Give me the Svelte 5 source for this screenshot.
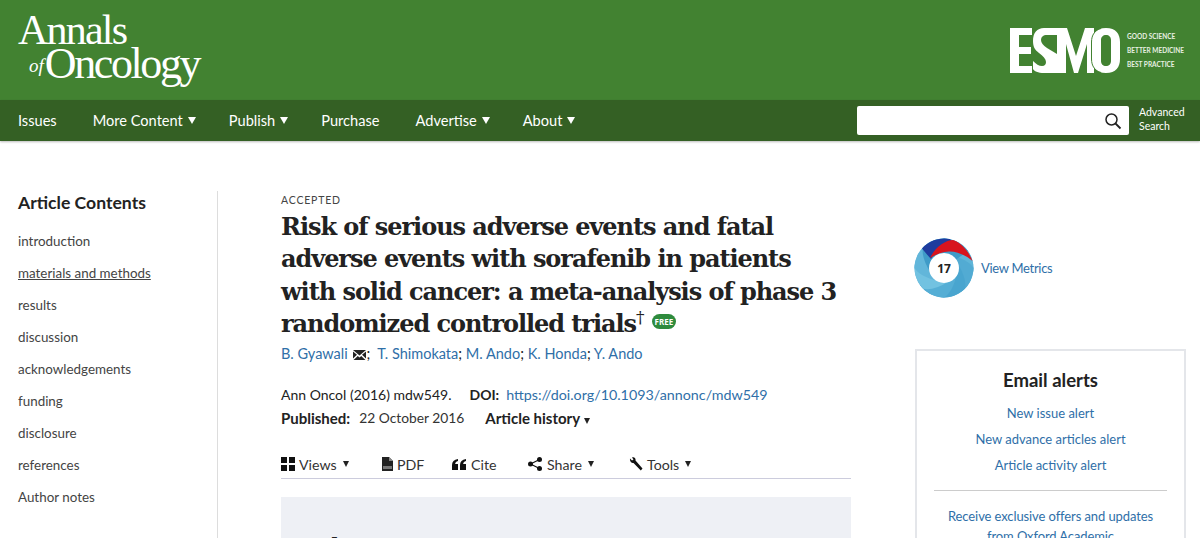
<script>
  const nav = [
    { label: 'Issues' },
    { label: 'More Content', caret: true },
    { label: 'Publish', caret: true },
    { label: 'Purchase' },
    { label: 'Advertise', caret: true },
    { label: 'About', caret: true }
  ];
  const toc = ['introduction', 'materials and methods', 'results', 'discussion', 'acknowledgements', 'funding', 'disclosure', 'references', 'Author notes'];
  const authors = ['T. Shimokata', 'M. Ando', 'K. Honda', 'Y. Ando'];
  const petals = [
    { r: 0, c: '#68bbdc' }, { r: 45, c: '#5fb5d8' }, { r: 90, c: '#52abd3' }, { r: 135, c: '#49a5cf' },
    { r: 180, c: '#55aed5' }, { r: 225, c: '#72c2e1' }, { r: 270, c: '#62b6da' }, { r: 315, c: '#3f9bc8' }
  ];
</script>

<div class="page">
  <header class="brand">
    <div class="logo">
      <span class="annals">Annals</span>
      <span class="oncology"><i>of</i>Oncology</span>
    </div>
    <div class="esmo">
      <svg class="esmo-mark" width="110" height="45" viewBox="0 0 110 45" aria-hidden="true">
        <path fill="#fff" d="M0 0H22V7H9V19H21V26H9V38H22V45H0Z"/>
        <path fill="#fff" d="M34 0H48V45H34C28 45 24 43 23 41V33C26 36 29 38 32 38C35 38 36 36 36 34C36 31 33 28 29 25C25 22 23 19 23 13C23 5 27 0 34 0Z"/>
        <path fill="#428231" d="M47 7H37C33 7 31 9 31 12C31 15 33 17 37 20L47 26Z"/>
        <path fill="#fff" d="M48 0H57L66 28L75 0H84V45H77V16L68 45H64L56 16V45H48Z"/>
        <path fill="#fff" fill-rule="evenodd" d="M96 0C106 0 110 6 110 14V31C110 39 106 45 96 45C86 45 82 39 82 31V14C82 6 86 0 96 0ZM96 7C93 7 91 9 91 12V33C91 36 93 38 96 38C99 38 101 36 101 33V12C101 9 99 7 96 7Z"/>
        <path fill="none" stroke="#428231" stroke-width="1" d="M91 .5C85 2 81.500 7 81.500 14V31C81.500 38 85 43 91 44.500"/>
      </svg>
      <div class="tag"><span>GOOD SCIENCE</span><span>BETTER MEDICINE</span><span>BEST PRACTICE</span></div>
    </div>
  </header>

  <nav class="nav">
    <ul>
      {#each nav as n}
        <li class:plain={!n.caret}>{n.label}{#if n.caret}<span class="caret"></span>{/if}</li>
      {/each}
    </ul>
    <div class="search">
      <div class="box">
        <svg width="18" height="18" viewBox="0 0 18 18" aria-hidden="true"><circle cx="7.500" cy="7.500" r="5.500" fill="none" stroke="#222" stroke-width="1.500"/><path d="M11.500 11.500l5 5" stroke="#222" stroke-width="1.800"/></svg>
      </div>
      <div class="adv">Advanced<br />Search</div>
    </div>
  </nav>

  <main class="body">
    <aside class="side">
      <h2>Article Contents</h2>
      <ul>
        {#each toc as t, i}
          <li class:ul={i === 1}>{t}</li>
        {/each}
      </ul>
    </aside>

    <article class="article">
      <div class="accepted">ACCEPTED</div>
      <h1>Risk of serious adverse events and fatal adverse events with sorafenib in patients with solid cancer: a meta-analysis of phase 3 randomized controlled trials<sup>†</sup><span class="free">FREE</span></h1>
      <div class="authors">
        <a href="#a">B. Gyawali</a>
        <svg class="mail" width="13" height="10" viewBox="0 0 13 10" aria-hidden="true"><path d="M0 0h13L6.500 5.500zM0 1.500v7l4-3.700zM13 1.500v7l-4-3.700zM.5 10l4.300-4 1.700 1.500L8.200 6l4.300 4z" fill="#222"/></svg><span class="sep">;</span>{' '}
        {#each authors as a, i}<a href="#a">{a}</a>{#if i < authors.length - 1}<span class="sep">;</span>{' '}{/if}{/each}
      </div>
      <div class="cite">
        <span>Ann Oncol (2016) mdw549.</span>
        <b class="doi">DOI:</b>
        <a href="#a">https://doi.org/10.1093/annonc/mdw549</a>
      </div>
      <div class="pub">
        <b>Published:</b>
        <span class="date">22 October 2016</span>
        <b class="hist">Article history<span class="caret small"></span></b>
      </div>
      <div class="tools">
        <span class="tool views">
          <svg width="14" height="14" viewBox="0 0 14 14" aria-hidden="true"><path d="M0 0h6v6H0zM8 0h6v6H8zM0 8h6v6H0zM8 8h6v6H8z" fill="#111"/></svg>Views<span class="caret small"></span>
        </span>
        <span class="tool pdf">
          <svg width="11" height="14" viewBox="0 0 11 14" aria-hidden="true"><path d="M0 0h7l4 4v10H0z" fill="#222"/><path d="M7 0v4h4z" fill="#888"/><path d="M1 9h9v3H1z" fill="#777"/></svg>PDF
        </span>
        <span class="tool cite-t">
          <svg class="wide" width="14" height="11" viewBox="0 0 14 11" aria-hidden="true"><path d="M6 0v2C4 2.500 3.300 3.500 3.200 5H6v6H0V6C0 2.500 2 .5 6 0zM14 0v2c-2 .5-2.700 1.500-2.800 3H14v6H8V6c0-3.500 2-5.500 6-6z" fill="#111"/></svg>Cite
        </span>
        <span class="tool share">
          <svg class="wide" width="14" height="14" viewBox="0 0 14 14" aria-hidden="true"><circle cx="2.500" cy="7" r="2.500" fill="#111"/><circle cx="11.500" cy="2.500" r="2.500" fill="#111"/><circle cx="11.500" cy="11.500" r="2.500" fill="#111"/><path d="M2.500 7l9-4.500M2.500 7l9 4.500" stroke="#111" stroke-width="1.200"/></svg>Share<span class="caret small"></span>
        </span>
        <span class="tool wrench">
          <svg width="14" height="14" viewBox="0 0 14 14" aria-hidden="true"><path d="M1 1.500L3 3.500 4.500 2.500 3 .5C5-.5 7 1 6.500 3.500L13.500 11.500 11.800 13.500 4.500 6C2.500 6.500.5 4 1 1.500z" fill="#111"/></svg>Tools<span class="caret small"></span>
        </span>
      </div>
      <section class="abstract"><h3>Abstract</h3></section>
    </article>

    <aside class="right">
      <div class="metrics">
        <svg width="60" height="60" viewBox="-30 -30 60 60" aria-hidden="true">
          {#each petals as p}
            <path d="M0-29.500A29.500 29.500 0 0 1 29 5L0 0L-13-5Q-9-24 0-29.500Z" fill={p.c} transform="rotate({p.r})" />
          {/each}
          <path d="M-22-19.500A29.500 29.500 0 0 1 6-29L12-20C2-22-8-19-13-9C-16-12-19-16-22-19.500Z" fill="#1f3c9e"/>
          <path d="M-14-10C-9-21 2-28 9-28C18-25 25-16 28.500-7C22-13 12-17 5-16.500C-3-16-9-13-14-10Z" fill="#d8141e"/>
          <circle r="15" fill="#fff"/>
          <text y="5" text-anchor="middle" class="n">17</text>
        </svg>
        <a href="#a">View Metrics</a>
      </div>
      <div class="alerts">
        <h3>Email alerts</h3>
        <a href="#a">New issue alert</a>
        <a href="#a">New advance articles alert</a>
        <a href="#a">Article activity alert</a>
        <hr />
        <a href="#a" class="offer">Receive exclusive offers and updates from Oxford Academic</a>
      </div>
    </aside>
  </main>
</div>

<style>
  :global(body) { margin: 0; background: #fff; overflow: hidden; }
  .page { width: 1200px; height: 538px; overflow: hidden; font-family: Lato, "Noto Sans", sans-serif; color: #222; }
  a { color: #2f6fa8; text-decoration: none; }
  .brand { height: 100px; background: #428231; display: flex; justify-content: space-between; padding: 0 14px 0 18px; box-sizing: border-box; }
  .logo { font-family: "Liberation Serif", serif; color: #fff; display: flex; flex-direction: column; padding-top: 11px; letter-spacing: -1.800px; }
  .annals { font-size: 42px; line-height: 38px; }
  .oncology { font-size: 44px; line-height: 36px; margin-left: 11px; margin-top: -3px; white-space: nowrap; letter-spacing: -2.400px; }
  .oncology i { font-size: 19px; letter-spacing: 0; vertical-align: 6px; margin-right: 1px; }
  .esmo { display: flex; gap: 7px; align-items: center; color: #e8f0e2; }
  .tag { display: flex; flex-direction: column; gap: 5px; font-size: 6.500px; line-height: 9px; font-weight: 700; white-space: nowrap; width: 59px; }
  .nav { height: 41px; background: #346024; display: flex; justify-content: space-between; padding: 0 12px 0 18px; box-sizing: border-box; align-items: center; box-shadow: 0 1px 2px #0004; }
  .nav ul { list-style: none; margin: 0; padding: 0; display: flex; gap: 33px; color: #fff; font-size: 14.600px; }
  .nav li { display: flex; align-items: center; gap: 5px; }
  .nav li.plain { margin-right: 3px; }
  .caret { display: inline-block; border: 4.500px solid transparent; border-top: 7px solid #fff; border-bottom: 0; }
  .caret.small { border-top-color: #222; border-width: 6px 3.500px 0; margin-left: 1px; }
  .hist .caret.small { margin-left: 4px; }
  .search { display: flex; align-items: center; gap: 10px; }
  .box { width: 272px; height: 29px; background: #fff; border-radius: 2px; display: flex; align-items: center; justify-content: flex-end; padding-right: 7px; box-sizing: border-box; }
  .adv { font-size: 10.500px; line-height: 13.500px; color: #fff; width: 49px; margin-top: -2px; }
  .body { display: flex; }
  .side { width: 218px; height: 347px; margin-top: 50px; border-right: 1px solid #ddd; box-sizing: border-box; padding-left: 18px; }
  .side h2 { font-size: 17.600px; font-weight: 700; margin: 1px 0 0; line-height: 22px; }
  .side ul { list-style: none; margin: 18px 0 0; padding: 0; font-size: 13.400px; color: #444; }
  .side li { height: 32px; line-height: 18px; }
  .side .ul { text-decoration: underline; }
  .article { width: 570px; margin-left: 63px; padding-top: 52px; }
  .accepted { font-size: 10.500px; letter-spacing: .8px; line-height: 14px; color: #444; }
  h1 { font-family: "DejaVu Serif", serif; font-size: 24px; line-height: 32.400px; font-weight: 700; margin: 4px 0 0; color: #222; letter-spacing: -1.050px; }
  sup { font-weight: 400; font-size: 17px; line-height: 0; }
  .free { display: inline-block; font: 700 8px/15px "Noto Sans", sans-serif; color: #fff; background: #2e8b3d; border-radius: 8px; padding: 0 3px; margin-left: 8px; vertical-align: 7px; letter-spacing: 0; }
  .authors { font-size: 14.500px; line-height: 18px; margin-top: 4px; color: #222; white-space: pre-wrap; }
  .mail { margin-left: 2px; vertical-align: -1px; }
  .cite { font-size: 14px; line-height: 18px; margin-top: 23px; display: flex; }
  .doi { margin-left: 18px; font-weight: 700; }
  .cite a { margin-left: 7px; font-size: 14.300px; }
  .pub { font-size: 14px; line-height: 18px; margin-top: 5px; display: flex; align-items: center; }
  .pub b { font-weight: 700; font-size: 15px; }
  .date { margin-left: 9px; color: #333; font-size: 13.800px; }
  .pub .hist { margin-left: 21px; }
  .tools { display: flex; font-size: 14.200px; margin-top: 28px; height: 23px; border-bottom: 1px solid #ccd; color: #333; align-items: flex-start; }
  .tool { display: flex; align-items: center; gap: 4px; line-height: 19px; }
  .tool .wide { margin-right: 1px; }
  .tool .caret { margin-left: 2px; }
  .views { width: 101px; } .pdf { width: 70px; } .cite-t { width: 76px; } .share { width: 101px; }
  .abstract { margin-top: 18px; height: 100px; background: #eef0f5; padding: 36px 0 0 35px; box-sizing: border-box; }
  h3 { margin: 0; }
  .abstract h3 { font-family: "DejaVu Serif", serif; font-size: 20px; line-height: 26px; font-weight: 700; }
  .right { margin-left: 64px; width: 271px; padding-top: 97px; }
  .metrics { display: flex; align-items: center; gap: 7px; font-size: 13px; letter-spacing: -.3px; height: 60px; margin-left: -1px; }
  .n { font: 700 12px "Noto Sans", sans-serif; fill: #222; letter-spacing: 0; }
  .alerts { margin-top: 51px; border: 2px solid #e4e6ea; box-sizing: border-box; height: 200px; padding: 18px 17px 0; display: flex; flex-direction: column; align-items: center; font-size: 13px; }
  .alerts h3 { font-size: 18.500px; font-weight: 700; line-height: 22px; margin-bottom: 9px; }
  .alerts > a { line-height: 26px; }
  hr { width: 100%; border: 0; border-top: 1px solid #ccc; margin: 12px 0 15px; }
  .alerts .offer { text-align: center; line-height: 20px; letter-spacing: -.1px; }
</style>
